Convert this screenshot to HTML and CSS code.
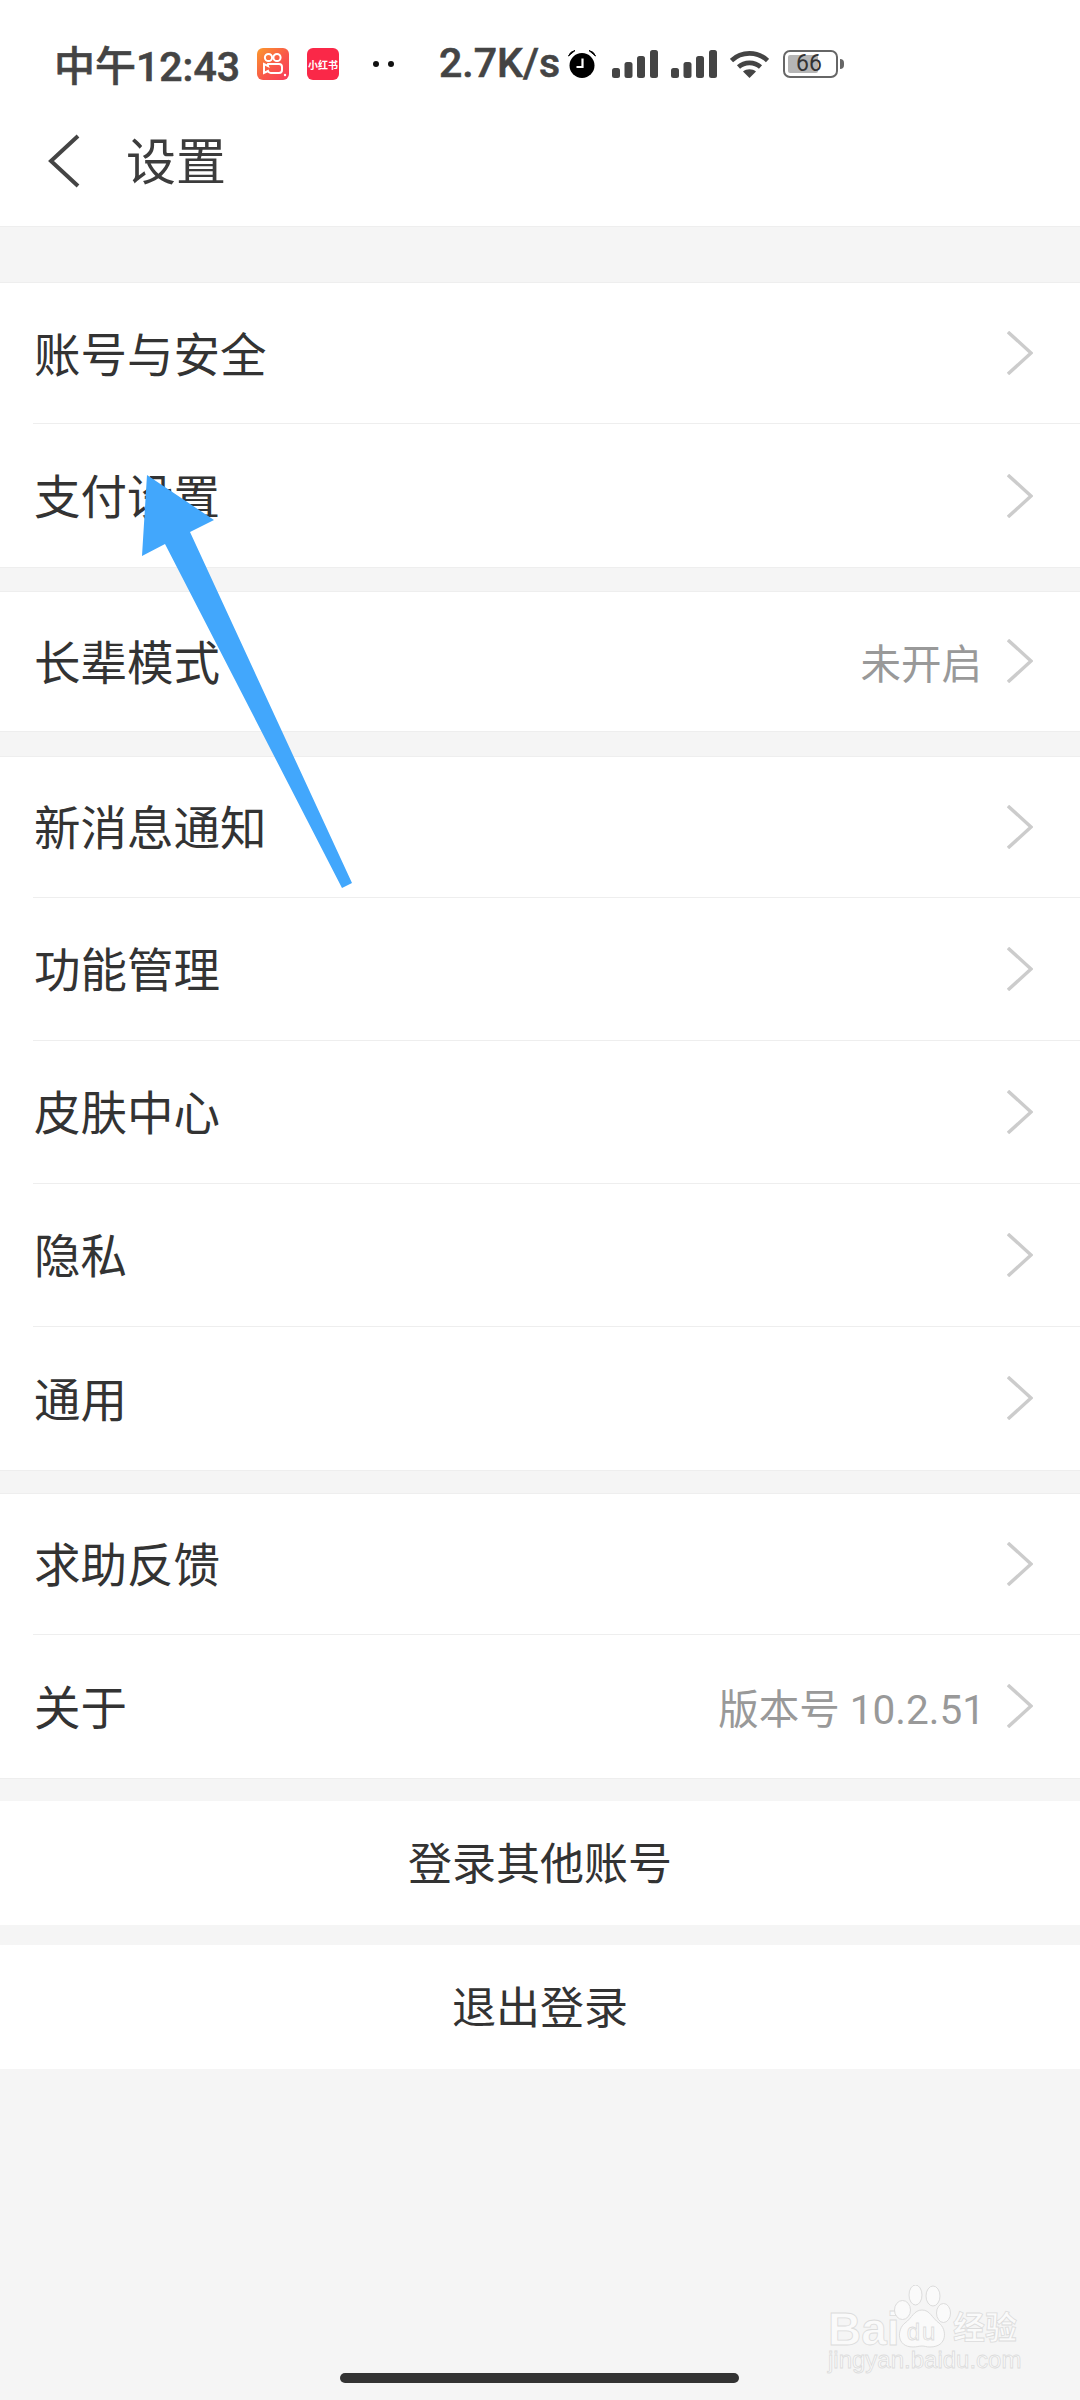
FILE: index.html
```html
<!doctype html>
<html lang="zh-CN">
<head>
	<meta charset="UTF-8">
	<title>设置</title>
	<link rel="stylesheet" href="styles.css">
</head>
<body>
	<div class="page">
		<div class="top">
			<div class="status">
				<span class="time">中午12:43</span>
				<svg class="app-ks" width="32" height="32" viewBox="0 0 32 32">
					<defs>
						<linearGradient id="ks" x1="0" y1="0" x2="1" y2="1">
							<stop offset="0" stop-color="#fb9a2c"/>
							<stop offset="0.55" stop-color="#f9574a"/>
							<stop offset="1" stop-color="#f93a5c"/>
						</linearGradient>
					</defs>
					<rect width="32" height="32" rx="6" fill="url(#ks)"/>
					<circle cx="11.5" cy="9.5" r="3.6" fill="none" stroke="#fff" stroke-width="2"/>
					<circle cx="20" cy="9.5" r="3.6" fill="none" stroke="#fff" stroke-width="2"/>
					<path d="M11 16h11a3 3 0 0 1 3 3v3a3 3 0 0 1-3 3h-8a3 3 0 0 1-3-2l-4 2v-9l4 2a3 3 0 0 1 0-2z" fill="none" stroke="#fff" stroke-width="2"/>
					<circle cx="28" cy="27" r="1.2" fill="#fff"/>
				</svg>
				<span class="app-red">小红书</span>
				<span class="dots"><i></i><i></i></span>
				<span class="speed">2.7K/s</span>
				<svg class="alarm" width="30" height="30" viewBox="0 0 30 30">
					<circle cx="15" cy="16.5" r="12.5" fill="#000"/>
					<path d="M1.5 7 Q3 2.5 8 1.5Z M28.5 7 Q27 2.5 22 1.5Z" fill="#000" stroke="#000" stroke-width="1"/>
					<path d="M15.5 9.5v8.5h-6" fill="none" stroke="#fff" stroke-width="2.2"/>
				</svg>
				<svg class="signal" width="46" height="28" viewBox="0 0 46 28">
					<rect x="0" y="18" width="8" height="10" rx="2.5"/>
					<rect x="12.5" y="12" width="8" height="16" rx="2.5"/>
					<rect x="25" y="6" width="8" height="22" rx="2.5"/>
					<rect x="38" y="0" width="8" height="28" rx="2.5"/>
				</svg>
				<svg class="signal signal-2" width="46" height="28" viewBox="0 0 46 28">
					<rect x="0" y="18" width="8" height="10" rx="2.5"/>
					<rect x="12.5" y="12" width="8" height="16" rx="2.5"/>
					<rect x="25" y="6" width="8" height="22" rx="2.5"/>
					<rect x="38" y="0" width="8" height="28" rx="2.5"/>
				</svg>
				<svg class="wifi" width="39" height="28" viewBox="0 0 39 28">
					<path d="M1.5 10.5C11.5 1 27.5 1 37.5 10.5" fill="none" stroke="#444" stroke-width="4.6"/>
					<path d="M8.5 17C14.5 11.5 24.5 11.5 30.5 17" fill="none" stroke="#444" stroke-width="4.6"/>
					<path d="M13 21.5C16.5 18.5 22.5 18.5 26 21.5L19.5 28z" fill="#444"/>
				</svg>
				<span class="battery"><span class="battery-num">66</span></span>
				<span class="battery-nub"></span>
			</div>
			<div class="nav">
				<svg class="back" width="34" height="54" viewBox="0 0 34 54">
					<path d="M31 2 L4 27 L31 52" fill="none" stroke="#444" stroke-width="4"/>
				</svg>
				<span class="title">设置</span>
			</div>
		</div>

		<div class="group group-first">
			<div class="row"><span class="name">账号与安全</span><svg class="arrow" width="26" height="44" viewBox="0 0 26 44"><path d="M1 1 L24 22 L1 43" fill="none" stroke="#ccc" stroke-width="3.4"/></svg></div>
			<div class="row"><span class="name">支付设置</span><svg class="arrow" width="26" height="44" viewBox="0 0 26 44"><path d="M1 1 L24 22 L1 43" fill="none" stroke="#ccc" stroke-width="3.4"/></svg></div>
		</div>

		<div class="group group-single">
			<div class="row"><span class="name">长辈模式</span><span class="value">未开启</span><svg class="arrow" width="26" height="44" viewBox="0 0 26 44"><path d="M1 1 L24 22 L1 43" fill="none" stroke="#ccc" stroke-width="3.4"/></svg></div>
		</div>

		<div class="group">
			<div class="row"><span class="name">新消息通知</span><svg class="arrow" width="26" height="44" viewBox="0 0 26 44"><path d="M1 1 L24 22 L1 43" fill="none" stroke="#ccc" stroke-width="3.4"/></svg></div>
			<div class="row"><span class="name">功能管理</span><svg class="arrow" width="26" height="44" viewBox="0 0 26 44"><path d="M1 1 L24 22 L1 43" fill="none" stroke="#ccc" stroke-width="3.4"/></svg></div>
			<div class="row"><span class="name">皮肤中心</span><svg class="arrow" width="26" height="44" viewBox="0 0 26 44"><path d="M1 1 L24 22 L1 43" fill="none" stroke="#ccc" stroke-width="3.4"/></svg></div>
			<div class="row"><span class="name">隐私</span><svg class="arrow" width="26" height="44" viewBox="0 0 26 44"><path d="M1 1 L24 22 L1 43" fill="none" stroke="#ccc" stroke-width="3.4"/></svg></div>
			<div class="row"><span class="name">通用</span><svg class="arrow" width="26" height="44" viewBox="0 0 26 44"><path d="M1 1 L24 22 L1 43" fill="none" stroke="#ccc" stroke-width="3.4"/></svg></div>
		</div>

		<div class="group group-last">
			<div class="row"><span class="name">求助反馈</span><svg class="arrow" width="26" height="44" viewBox="0 0 26 44"><path d="M1 1 L24 22 L1 43" fill="none" stroke="#ccc" stroke-width="3.4"/></svg></div>
			<div class="row"><span class="name">关于</span><span class="value value-version">版本号 10.2.51</span><svg class="arrow" width="26" height="44" viewBox="0 0 26 44"><path d="M1 1 L24 22 L1 43" fill="none" stroke="#ccc" stroke-width="3.4"/></svg></div>
		</div>

		<div class="btn btn-first">登录其他账号</div>
		<div class="btn">退出登录</div>

		<div class="home-bar"></div>

		<!-- annotation arrow drawn over the list -->
		<svg class="pointer" width="240" height="440" viewBox="130 460 240 440">
			<polygon points="147,475 214,520 190,532 352,883 342,888 165,544 142,556" fill="#42a7fc"/>
		</svg>

		<!-- watermark -->
		<div class="mark">
			<div class="mark-top">
				<span class="mark-bai">Bai</span>
				<span class="mark-paw">
					<svg width="58" height="63" viewBox="893 2285 58 63">
						<ellipse cx="902.5" cy="2310" rx="8" ry="9.5"/>
						<ellipse cx="915.5" cy="2295" rx="6.5" ry="10"/>
						<ellipse cx="933" cy="2296" rx="7" ry="10"/>
						<ellipse cx="943.5" cy="2313" rx="7" ry="9.5"/>
						<path d="M922 2310c8 0 10 8 17 13 8 6 9 24-9 24-4 0-5-1-8-1s-5 1-9 1c-17 0-16-18-8-24 7-5 9-13 17-13z"/>
					</svg>
					<span class="mark-du">du</span>
				</span>
				<span class="mark-cn">经验</span>
			</div>
			<div class="mark-url">jingyan.baidu.com</div>
		</div>
	</div>
</body>
</html>
```

FILE: styles.css
```css
html,body{
	margin:0;
	padding:0;
}
*{
	box-sizing:border-box;
}
.page{
	position:relative;
	width:1080px;
	height:2400px;
	overflow:hidden;
	background:#f5f5f5;
	font-family:Roboto,"Noto Sans CJK SC",sans-serif;
	color:#333;
}
.top{
	height:227px;
	padding-top:44px;
	background:#fff;
	border-bottom:1px solid #eee;
}
.status{
	display:flex;
	align-items:center;
	height:40px;
	padding-left:54px;
	color:#444;
}
.time{
	width:203px;
	padding-bottom:2px;
	font-size:41px;
	font-weight:500;
	-webkit-text-stroke:0.6px #444;
	white-space:nowrap;
}
.app-red{
	display:flex;
	align-items:center;
	justify-content:center;
	width:32px;
	height:32px;
	margin-left:18px;
	border-radius:6px;
	background:#fa2848;
	color:#fff;
	font-size:10px;
	font-weight:700;
	white-space:nowrap;
}
.dots{
	display:flex;
	gap:9px;
	margin-left:34px;
}
.dots i{
	display:block;
	width:6px;
	height:6px;
	border-radius:50%;
	background:#111;
}
.speed{
	width:125px;
	margin-left:45px;
	padding-bottom:2px;
	font-size:41px;
	font-weight:500;
	-webkit-text-stroke:0.6px #444;
	white-space:nowrap;
}
.alarm{
	margin-left:3px;
}
.signal{
	margin-left:15px;
	fill:#444;
}
.signal-2{
	margin-left:13px;
}
.wifi{
	margin-left:13px;
}
.battery{
	display:flex;
	align-items:center;
	width:55px;
	height:28px;
	margin-left:14px;
	padding:3px;
	border:2.5px solid #666;
	border-radius:7px;
	background:#fff;
	background-clip:padding-box;
}
.battery-num{
	display:block;
	width:66%;
	height:100%;
	padding-left:8px;
	background:#b5b5b5;
	border-radius:2px;
	color:#333;
	font-size:23px;
	line-height:18px;
	overflow:visible;
	white-space:nowrap;
}
.battery-nub{
	width:4px;
	height:10px;
	margin-left:2px;
	background:#666;
	border-radius:0 4px 4px 0;
}
.nav{
	display:flex;
	align-items:center;
	height:54px;
	margin-top:50px;
	padding-left:47px;
}
.title{
	margin-left:45px;
	padding-top:4px;
	font-size:50px;
	line-height:54px;
	color:#3c3c3c;
}
.group{
	margin-top:23.5px;
	background:#fff;
	border-bottom:1px solid #eee;
	border-top:1px solid #eee;
}
.group-first{
	margin-top:55px;
}
.group-single{
	margin-top:22.5px;
}
.group-single + .group{
	margin-top:24px;
}
.group-last{
	margin-top:22px;
}
.row{
	display:flex;
	align-items:center;
	height:143px;
	margin-left:33px;
	padding-left:1px;
	padding-right:47px;
	border-bottom:1px solid #eee;
}
.row:first-child{
	height:141px;
}
.row:last-child{
	border-bottom:0;
}
.group-single .row{
	height:139px;
}
.name{
	flex:1;
	padding-bottom:4px;
	font-size:46.5px;
	color:#333;
}
.value{
	margin-right:25px;
	font-size:40.5px;
	color:#999;
}
.value-version{
	margin-right:22px;
}
.btn{
	display:flex;
	align-items:center;
	justify-content:center;
	height:124px;
	margin-top:20px;
	padding-bottom:4px;
	background:#fff;
	font-size:44px;
	color:#333;
}
.btn-first{
	margin-top:22.5px;
}
.home-bar{
	position:absolute;
	left:340px;
	top:2373px;
	width:399px;
	height:10px;
	border-radius:5px;
	background:#333;
}
.pointer{
	position:absolute;
	left:130px;
	top:460px;
}
.mark{
	position:absolute;
	left:828px;
	top:2285px;
	width:195px;
	font-family:"Liberation Sans","Noto Sans CJK SC",sans-serif;
	color:#fafafa;
	-webkit-text-stroke:0.8px #dcdcdc;
}
.mark-top{
	display:flex;
	align-items:flex-end;
	height:63px;
}
.mark-bai{
	width:65px;
	margin-bottom:3px;
	font-size:46px;
	font-weight:700;
	line-height:32px;
}
.mark-paw{
	position:relative;
	display:flex;
	justify-content:center;
	width:58px;
	height:63px;
	fill:#fafafa;
	stroke:#dcdcdc;
	stroke-width:1;
}
.mark-paw svg{
	position:absolute;
	left:0;
	top:0;
}
.mark-du{
	position:relative;
	align-self:flex-end;
	margin-bottom:6px;
	font-size:24px;
	line-height:20px;
	letter-spacing:2px;
}
.mark-cn{
	margin-left:2px;
	margin-bottom:4px;
	font-size:32px;
	font-weight:700;
	line-height:32px;
}
.mark-url{
	font-size:24px;
	line-height:24px;
	white-space:nowrap;
}
```
